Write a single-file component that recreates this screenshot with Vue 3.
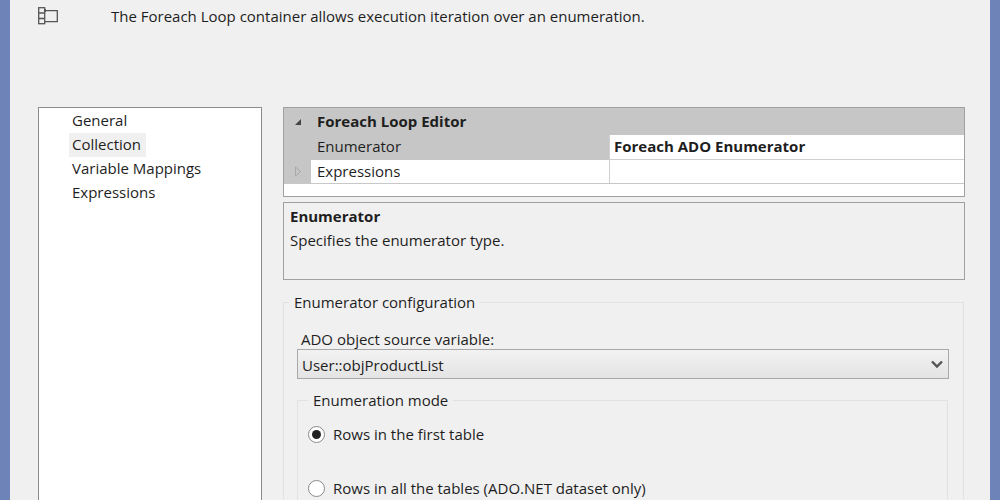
<template>
  <div class="ventana">
    <div class="cabecera">
      <svg class="icono" width="20" height="18" viewBox="0 0 20 18" fill="none" stroke="#555" stroke-width="1.3">
        <rect x="0.7" y="0.7" width="6" height="16" />
        <path d="M0.7 6h6M0.7 11.5h6" />
        <path d="M6.7 3.7h12.6v11H6.7" />
        <path d="M7 2v3" stroke-width="2" />
      </svg>
      <p class="descripcion">The Foreach Loop container allows execution iteration over an enumeration.</p>
    </div>

    <div class="cuerpo">
      <ul class="menu">
        <li v-for="m in menu" :key="m" :class="{ activo: m === 'Collection' }">{{ m }}</li>
      </ul>

      <div class="derecha">
        <div class="tabla">
          <div class="fila titulo">
            <span class="margen"><i class="flecha-abierta"></i></span>
            <b>Foreach Loop Editor</b>
          </div>
          <div class="fila">
            <span class="margen"></span>
            <span class="nombre gris">Enumerator</span>
            <b class="valor">Foreach ADO Enumerator</b>
          </div>
          <div class="fila ultima">
            <span class="margen">
              <svg width="8" height="11" viewBox="0 0 8 11" fill="none" stroke="#a8a8a8">
                <path d="M1.5 1v9l5-4.5z" />
              </svg>
            </span>
            <span class="nombre">Expressions</span>
            <span class="valor"></span>
          </div>
        </div>

        <div class="ayuda">
          <b>Enumerator</b>
          <p>Specifies the enumerator type.</p>
        </div>

        <fieldset class="grupo">
          <legend>Enumerator configuration</legend>
          <label class="etiqueta">ADO object source variable:</label>
          <div class="combo">
            <span>User::objProductList</span>
            <svg width="12" height="9" viewBox="0 0 12 9" fill="none" stroke="#555" stroke-width="2.4">
              <path d="M1 1.5l5 5 5-5" />
            </svg>
          </div>

          <fieldset class="grupo interno">
            <legend>Enumeration mode</legend>
            <div class="opcion" v-for="o in opciones" :key="o.texto">
              <span class="radio" :class="{ marcado: o.marcado }"></span>
              {{ o.texto }}
            </div>
          </fieldset>
        </fieldset>
      </div>
    </div>
  </div>
</template>

<script setup>
const menu = ["General", "Collection", "Variable Mappings", "Expressions"];

const opciones = [
  { texto: "Rows in the first table", marcado: true },
  { texto: "Rows in all the tables (ADO.NET dataset only)", marcado: false },
];
</script>

<style>
html,
body {
  margin: 0;
  height: 500px;
  overflow: hidden;
}
</style>

<style scoped>
* {
  box-sizing: border-box;
  margin: 0;
}

.ventana {
  height: 500px;
  overflow: hidden;
  background-color: #f0f0f0;
  border-left: 10px solid #6e83b8;
  border-right: 10px solid #6e83b8;
  padding: 0 25px 0 28px;
  font-family: "Open Sans", sans-serif;
  font-size: 15px;
  color: #1e1e1e;
}

.cabecera {
  height: 107px;
  display: flex;
  align-items: flex-start;
  padding-top: 7px;
}

.icono {
  margin-right: 53px;
}

.descripcion {
  line-height: 20px;
  margin-top: -1px;
}

.cuerpo {
  display: flex;
  gap: 21px;
  height: 500px;
}

.menu {
  width: 224px;
  flex: none;
  background-color: #fff;
  border: 1px solid #8c8c8c;
  list-style: none;
  padding: 1px 0 0 30px;
}

.menu li {
  width: fit-content;
  height: 24px;
  line-height: 22px;
  padding: 0 2px 0 3px;
}

.menu .activo {
  background-color: #f0f0f0;
  padding-right: 5px;
}

.derecha {
  flex: 1;
}

.tabla {
  height: 90px;
  background-color: #fff;
  border: 1px solid #a0a0a0;
}

.fila {
  display: flex;
  height: 25px;
  line-height: 23px;
  background-color: #c6c6c6;
}

.titulo {
  height: 27px;
  line-height: 26px;
}

.margen {
  width: 27px;
  flex: none;
  display: flex;
  align-items: center;
  justify-content: center;
}

.titulo .margen {
  width: 33px;
  padding-right: 6px;
}

.flecha-abierta {
  width: 0;
  height: 0;
  border-left: 6px solid transparent;
  border-bottom: 6px solid #444;
}

.nombre {
  width: 298px;
  flex: none;
  background-color: #fff;
  padding-left: 6px;
}

.gris {
  background-color: #c6c6c6;
}

.valor {
  flex: 1;
  background-color: #fff;
  padding-left: 4px;
  border-left: 1px solid #d0d0d0;
  border-bottom: 1px solid #d0d0d0;
}

.ultima {
  height: 24px;
  border-bottom: 1px solid #c8c8c8;
}

.ultima .valor {
  border-bottom: none;
}

.ayuda {
  height: 78px;
  margin-top: 5px;
  border: 1px solid #a0a0a0;
  padding: 1px 6px;
  line-height: 24px;
}

.grupo {
  border: 1px solid #e2e2e2;
  margin: 12px 1px 0 0;
  padding: 0 14px 0 13px;
  min-width: 0;
  height: 300px;
}

.grupo legend {
  padding: 0 5px;
  margin-left: -8px;
  line-height: 20px;
}

.etiqueta {
  display: block;
  line-height: 20px;
  margin-top: 17px;
  padding-left: 4px;
}

.combo {
  height: 30px;
  display: flex;
  align-items: center;
  justify-content: space-between;
  padding: 1px 5px 0 4px;
  border: 1px solid #a9a9a9;
  background: linear-gradient(#f2f2f2, #e4e4e4);
}

.interno {
  margin-top: 11px;
  height: 200px;
  padding: 0 0 0 10px;
}

.interno legend {
  margin-left: 0;
}

.opcion {
  display: flex;
  align-items: center;
  gap: 8px;
  height: 20px;
  margin-top: 14px;
  margin-bottom: 34px;
}

.radio {
  width: 17px;
  height: 17px;
  flex: none;
  border: 1px solid #8a8a8a;
  border-radius: 50%;
  background-color: #fff;
  display: flex;
  align-items: center;
  justify-content: center;
}

.marcado::after {
  content: "";
  width: 9px;
  height: 9px;
  border-radius: 50%;
  background-color: #222;
}
</style>
